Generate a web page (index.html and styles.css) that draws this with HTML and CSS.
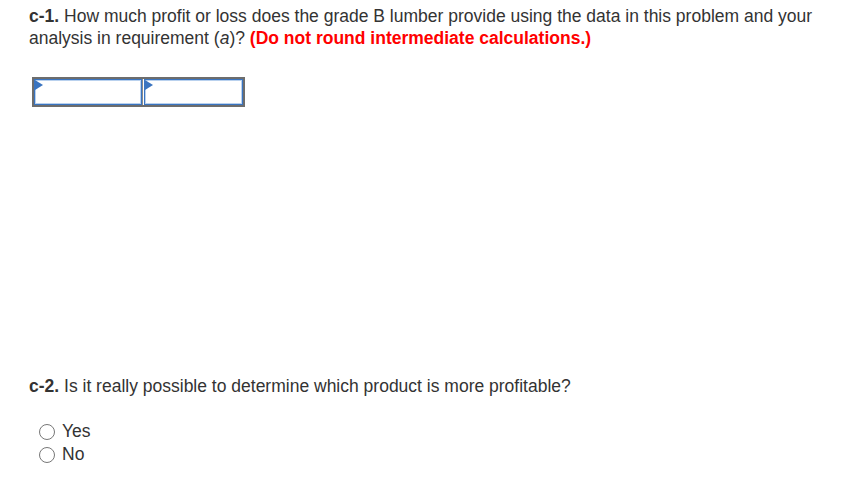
FILE: index.html
```html
<!DOCTYPE html>
<html>
<head>
<meta charset="utf-8">
<link rel="stylesheet" href="styles.css">
</head>
<body>
<div class="page">
  <p class="question"><b>c-1.</b> How much profit or loss does the grade B lumber provide using the data in this problem and your analysis in requirement (<i>a</i>)? <span class="warn">(Do not round intermediate calculations.)</span></p>
  <div class="answer-table">
    <div class="cell c1"><span class="flag"></span></div>
    <div class="sep"></div>
    <div class="cell c2"><span class="flag"></span></div>
  </div>
  <p class="question q2"><b>c-2.</b> Is it really possible to determine which product is more profitable?</p>
  <div class="options">
    <label class="option"><span class="radio"></span>Yes</label>
    <label class="option"><span class="radio"></span>No</label>
  </div>
</div>
</body>
</html>
```
FILE: styles.css
```css
html, body {
  margin: 0;
  padding: 0;
  background: #fff;
}
.page {
  padding: 5px 0 0 29px;
  font-family: "Liberation Sans", Arial, sans-serif;
  font-size: 17.5px;
  color: #333;
}
.question {
  margin: 0;
  line-height: 22px;
  width: 800px;
}
.warn {
  color: #f00;
  font-weight: bold;
}
.answer-table {
  display: flex;
  margin: 28px 0 0 3px;
  width: 209px;
  height: 26px;
  border: 2px solid #6d6d6d;
  background: #fff;
}
.cell {
  position: relative;
  box-sizing: border-box;
  height: 100%;
  border: 1px solid #3a74c0;
  box-shadow: inset 0 0 0 1px #b9d1ee;
  background: #fff;
}
.c1 { width: 108px; }
.c2 { width: 99px; margin-left: 1px; }
.sep {
  width: 1px;
  background: #8a8a8a;
}
.flag {
  position: absolute;
  left: 0;
  top: 0;
  width: 0;
  height: 0;
  border-top: 5px solid transparent;
  border-bottom: 5px solid transparent;
  border-left: 8px solid #3a74c0;
}
.q2 {
  margin-top: 268px;
}
.options {
  margin-top: 23px;
  padding-left: 10px;
  display: flex;
  flex-direction: column;
}
.option {
  display: flex;
  align-items: center;
  height: 23px;
  gap: 7px;
}
.radio {
  width: 14px;
  height: 14px;
  border: 1px solid #777;
  border-radius: 50%;
  background: #fff;
}
```
